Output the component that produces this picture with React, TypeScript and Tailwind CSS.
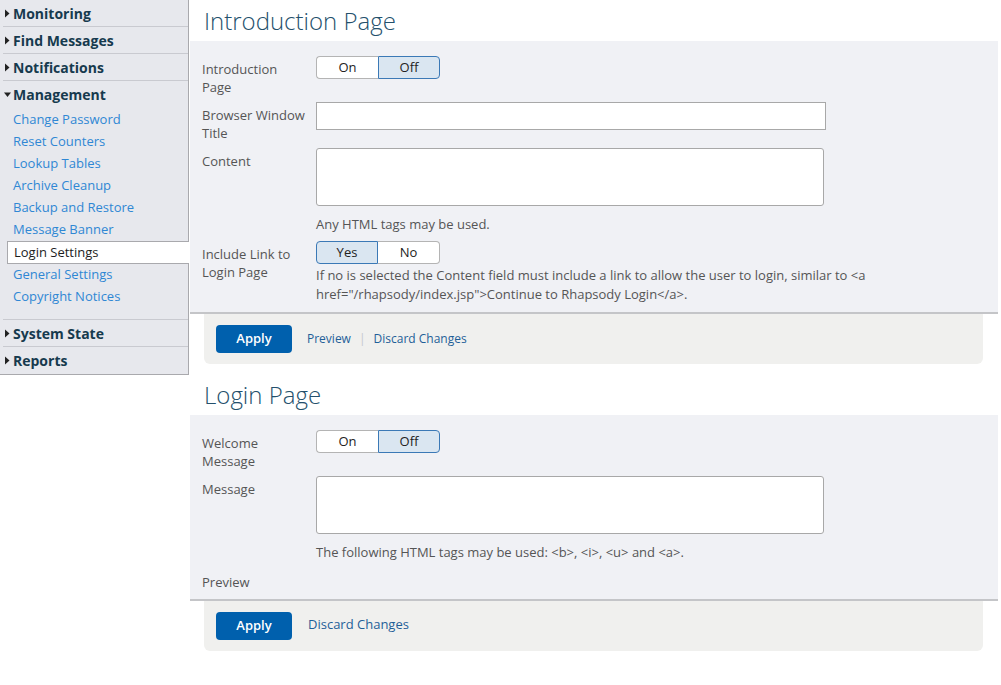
import React from "react";

const font = { fontFamily: '"Open Sans", "Noto Sans", sans-serif' };

function Caret({ open }: { open?: boolean }) {
  return open ? (
    <svg className="w-[7px] h-[7px] mr-[2px]" viewBox="0 0 7 7">
      <path d="M0 1.5h7L3.5 6z" fill="#222" />
    </svg>
  ) : (
    <svg className="w-[6px] h-[9px] mr-[3px]" viewBox="0 0 6 9">
      <path d="M1 0.5v8L5.5 4.5z" fill="#222" />
    </svg>
  );
}

function Group({ label, open }: { label: string; open?: boolean }) {
  return (
    <div className="ml-[3px] h-[27px] border-b border-[#c9cad0] flex items-center pl-[1px] text-[14px] font-bold text-[#163a4e]">
      <Caret open={open} />
      {label}
    </div>
  );
}

const subItems = [
  "Change Password",
  "Reset Counters",
  "Lookup Tables",
  "Archive Cleanup",
  "Backup and Restore",
  "Message Banner",
  "Login Settings",
  "General Settings",
  "Copyright Notices",
];

function Sidebar() {
  return (
    <aside className="w-[189px] shrink-0 self-start bg-[#e7e8ed] border-r border-b border-[#a9a9ad]">
      <Group label="Monitoring" />
      <Group label="Find Messages" />
      <Group label="Notifications" />
      <div className="ml-[3px] h-[27px] flex items-center pl-[1px] text-[14px] font-bold text-[#163a4e]">
        <Caret open />
        Management
      </div>
      <div className="pt-[1px] pb-[11px] border-b border-[#c9cad0] ml-[3px]">
        {subItems.map((s) =>
          s === "Login Settings" ? (
            <div
              key={s}
              className="ml-[4px] -mr-[1px] h-[23px] bg-white border border-r-0 border-[#a9a9ad] flex items-center pl-[6px] text-[13px] text-[#1d1d1d] relative"
            >
              {s}
            </div>
          ) : (
            <div key={s} className="h-[22px] flex items-center pl-[10px] text-[13px] text-[#2f87d4]">
              {s}
            </div>
          )
        )}
      </div>
      <Group label="System State" />
      <div className="ml-[3px] h-[27px] flex items-center pl-[1px] text-[14px] font-bold text-[#163a4e]">
        <Caret />
        Reports
      </div>
    </aside>
  );
}

function Toggle({ left, right, active }: { left: string; right: string; active: "left" | "right" }) {
  const on = "bg-[#dae6f1] border border-[#3b79b6]";
  const off = "bg-white border border-[#b4b4b4]";
  return (
    <div className="flex h-[23px] text-[13px] text-[#222]">
      <div
        className={`w-[62px] flex items-center justify-center rounded-l-[4px] ${active === "left" ? on : off + " border-r-0"}`}
      >
        {left}
      </div>
      <div
        className={`w-[62px] flex items-center justify-center rounded-r-[4px] ${active === "right" ? on : off + " border-l-0"}`}
      >
        {right}
      </div>
    </div>
  );
}

function Row({ label, children, className = "" }: { label: string; children: React.ReactNode; className?: string }) {
  return (
    <div className={`flex ${className}`}>
      <div className="w-[104px] mr-[10px] shrink-0 pt-[4px] text-[13px] leading-[18px] text-[#555]">{label}</div>
      <div className="flex-1">{children}</div>
    </div>
  );
}

function Heading({ children }: { children: React.ReactNode }) {
  return (
    <h2 className="h-[41px] flex items-center pl-[14px] text-[24px] font-light text-[#24506c]">{children}</h2>
  );
}

function ActionBar({ preview }: { preview?: boolean }) {
  return (
    <div className="ml-[14px] mr-[15px] h-[50px] bg-[#f0f0ee] rounded-b-[6px] flex items-start pt-[11px] pl-[12px]">
      <button className="w-[76px] h-[28px] rounded-[4px] bg-[#0060ad] text-white text-[13px] font-semibold">
        Apply
      </button>
      {preview ? (
        <div className="ml-[15px] h-[28px] flex items-center text-[12px] text-[#1f5f98]">
          <span>Preview</span>
          <span className="mx-[8px] text-[#c4c8cc]">|</span>
          <span>Discard Changes</span>
        </div>
      ) : (
        <div className="ml-[16px] h-[26px] flex items-center text-[13px] text-[#1f5f98]">Discard Changes</div>
      )}
    </div>
  );
}

export default function App() {
  return (
    <div className="min-h-screen bg-white flex" style={font}>
      <Sidebar />

      <main className="w-[808px] ml-[1px] shrink-0">
        {/* Introduction page */}
        <Heading>Introduction Page</Heading>
        <div className="bg-[#f0f1f5] border-b-2 border-[#c4c5c8] pt-[15px] pb-[8px] pl-[12px]">
          <Row label="Introduction Page">
            <Toggle left="On" right="Off" active="right" />
          </Row>
          <Row label="Browser Window Title" className="mt-[6px]">
            <div className="w-[510px] h-[28px] bg-white border border-[#a8a8a8]" />
          </Row>
          <Row label="Content" className="mt-[6px]">
            <div className="w-[508px] h-[58px] bg-white border border-[#a8a8a8] rounded-[3px]" />
            <p className="mt-[9px] text-[13px] leading-[18px] text-[#555]">Any HTML tags may be used.</p>
          </Row>
          <Row label="Include Link to Login Page" className="mt-[8px]">
            <Toggle left="Yes" right="No" active="left" />
            <p className="mt-[2px] w-[560px] text-[13px] leading-[19px] text-[#555]">
              If no is selected the Content field must include a link to allow the user to login, similar to &lt;a
              href="/rhapsody/index.jsp"&gt;Continue to Rhapsody Login&lt;/a&gt;.
            </p>
          </Row>
        </div>
        <ActionBar preview />

        {/* Login page */}
        <div className="mt-[10px]">
          <Heading>Login Page</Heading>
        </div>
        <div className="bg-[#f0f1f5] border-b-2 border-[#c4c5c8] pt-[15px] pb-[8px] pl-[12px]">
          <Row label="Welcome Message">
            <Toggle left="On" right="Off" active="right" />
          </Row>
          <Row label="Message" className="mt-[6px]">
            <div className="w-[508px] h-[58px] bg-white border border-[#a8a8a8] rounded-[3px]" />
            <p className="mt-[9px] text-[13px] leading-[18px] text-[#555]">
              The following HTML tags may be used: &lt;b&gt;, &lt;i&gt;, &lt;u&gt; and &lt;a&gt;.
            </p>
          </Row>
          <div className="mt-[12px] text-[13px] leading-[18px] text-[#555]">Preview</div>
        </div>
        <ActionBar />
      </main>
    </div>
  );
}
